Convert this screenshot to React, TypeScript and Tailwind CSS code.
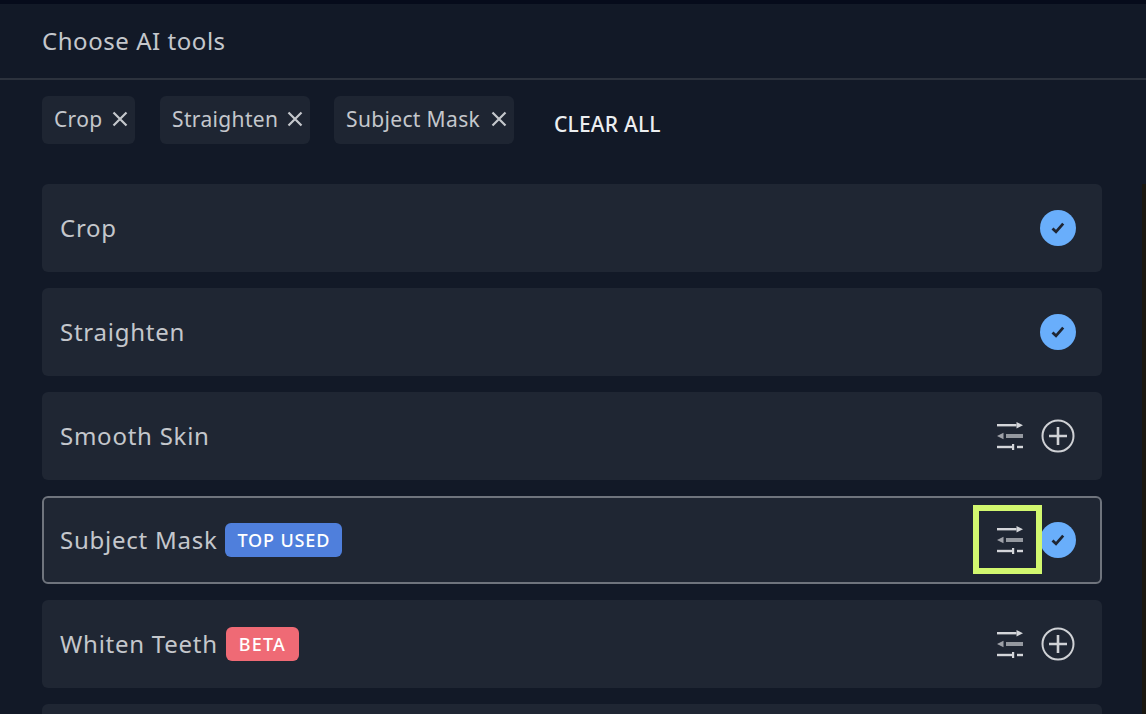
const font = { fontFamily: '"Noto Sans", sans-serif' };

function SlidersIcon() {
  return (
    <svg width="28" height="28" viewBox="0 0 28 28" className="text-[#d4d6da]" fill="currentColor">
      <rect x="1" y="2" width="19.5" height="2.4" />
      <path d="M20.5 0 L27 3.2 L20.5 6.4 Z" />
      <path d="M7.5 10.8 L1 14 L7.5 17.2 Z" opacity="0.7" />
      <rect x="10" y="12" width="17" height="4" opacity="0.65" />
      <rect x="1" y="23.8" width="15" height="2.4" />
      <rect x="16" y="22" width="2.2" height="6" />
      <rect x="21" y="23.8" width="6" height="2.4" />
    </svg>
  );
}

function PlusCircle() {
  return (
    <svg width="34" height="34" viewBox="0 0 34 34" fill="none" stroke="#cfd1d5">
      <circle cx="17" cy="17" r="15.5" strokeWidth="2" />
      <path d="M8 17 H26 M17 8 V26" strokeWidth="2.6" />
    </svg>
  );
}

function CheckCircle() {
  return (
    <span className="flex h-9 w-9 items-center justify-center rounded-full bg-[#69aefb]">
      <svg width="14" height="14" viewBox="0 0 14 14" fill="none" stroke="#1f2633" strokeWidth="2.8">
        <path d="M1.5 7.5 L5 10.8 L12.2 2.6" />
      </svg>
    </span>
  );
}

function ChipClose() {
  return (
    <svg width="16" height="16" viewBox="0 0 16 16" fill="none" stroke="currentColor" strokeWidth="2.2" className="-translate-y-px">
      <path d="M1.5 1.5 L14.5 14.5 M14.5 1.5 L1.5 14.5" />
    </svg>
  );
}

function Chip({ label, width }: { label: string; width: string }) {
  return (
    <div className={`flex h-12 items-center justify-between rounded-md bg-[#1e2532] pl-3 pr-[7px] text-[21px] tracking-[0.35px] text-[#c4c7cc] ${width}`}>
      <span>{label}</span>
      <ChipClose />
    </div>
  );
}

function ToolRow({
  name,
  badge,
  badgeClass,
  selected,
  focused,
}: {
  name: string;
  badge?: string;
  badgeClass?: string;
  selected?: boolean;
  focused?: boolean;
}) {
  const adjustable = name !== 'Crop' && name !== 'Straighten';
  return (
    <div
      className={`relative flex h-[88px] shrink-0 items-center justify-between rounded-md bg-[#1f2633] ${
        focused ? 'border-2 border-[#6f747d] pl-4 pr-6' : 'pl-[18px] pr-[26px]'
      }`}
    >
      <div className="flex items-center gap-2">
        <span className="text-[24px] tracking-[0.75px] text-[#c4c7cc]">{name}</span>
        {badge && (
          <span className={`flex h-[34px] items-center rounded-md text-[18px] font-medium text-white ${badgeClass}`}>
            {badge}
          </span>
        )}
      </div>
      <div className="flex items-center gap-4">
        {adjustable && <SlidersIcon />}
        {selected ? <CheckCircle /> : <span className="mx-px"><PlusCircle /></span>}
      </div>
      {focused && (
        <div className="absolute right-[58px] top-[7px] h-[69px] w-[69px] border-[6px] border-[#d2f76f]" />
      )}
    </div>
  );
}

export default function App() {
  return (
    <div className="flex h-[714px] w-[1146px] flex-col overflow-hidden bg-[#121927]" style={font}>
      <div className="h-1 shrink-0 bg-[#060b1b]" />

      {/* Header */}
      <div className="flex h-[76px] shrink-0 items-center border-b-2 border-[#2c323d] pl-[42px] text-[24px] tracking-[0.55px] text-[#c4c7cc]">
        Choose AI tools
      </div>

      {/* Selected chips */}
      <div className="flex shrink-0 items-center pl-[42px] pt-4">
        <Chip label="Crop" width="w-[93px] mr-[25px]" />
        <Chip label="Straighten" width="w-[150px] mr-[24px]" />
        <Chip label="Subject Mask" width="w-[180px] mr-10" />
        <span className="mt-[9px] text-[21px] font-medium tracking-[0.2px] text-[#eceef0]">CLEAR ALL</span>
      </div>

      {/* Tools */}
      <div className="mt-10 flex min-h-0 flex-1">
        <div className="ml-[42px] flex w-[1060px] flex-col gap-4">
          <ToolRow name="Crop" selected />
          <ToolRow name="Straighten" selected />
          <ToolRow name="Smooth Skin" />
          <ToolRow name="Subject Mask" badge="TOP USED" badgeClass="bg-[#4f7fdc] px-3 tracking-[0.85px]" selected focused />
          <ToolRow name="Whiten Teeth" badge="BETA" badgeClass="bg-[#ef6a75] px-[13px] tracking-[1.2px]" />
          <div className="h-[88px] shrink-0 rounded-md bg-[#1f2633]" />
        </div>
        <div className="ml-auto w-1 bg-[#1a1710]" />
      </div>
    </div>
  );
}
